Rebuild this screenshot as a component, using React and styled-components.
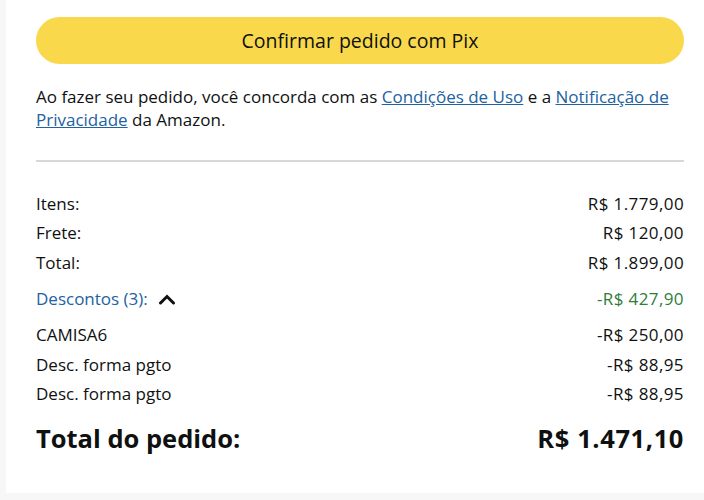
import React from "react";
import styled, { createGlobalStyle } from "styled-components";

const Global = createGlobalStyle`
  html, body { margin: 0; padding: 0; background: #f7f7f7; }
  body { font-family: "Open Sans", "Liberation Sans", Arial, sans-serif; color: #0f1111; }
`;

const Page = styled.div`
  display: flex;
  padding-left: 6px;
  height: 500px;
  box-sizing: border-box;
`;

const Card = styled.div`
  flex: 1;
  background: #fff;
  height: 493px;
  box-sizing: border-box;
  padding: 17px 20px 0 30px;
  display: flex;
  flex-direction: column;
`;

const PayButton = styled.button`
  height: 47px;
  border: none;
  border-radius: 24px;
  background: #f9d94b;
  font-family: inherit;
  font-size: 19.5px;
  color: #0f1111;
  cursor: pointer;
`;

const Legal = styled.p`
  margin: 21px 0 0;
  font-size: 17px;
  line-height: 23.3px;
`;

const Link = styled.a`
  color: #2162a1;
  text-decoration: underline;
`;

const Divider = styled.hr`
  border: none;
  border-top: 2px solid #d5d9d9;
  margin: 28px 0 27px;
`;

const Rows = styled.div`
  display: flex;
  flex-direction: column;
`;

const Row = styled.div`
  display: flex;
  justify-content: space-between;
  align-items: center;
  font-size: 17px;
  height: ${(p) => p.$h || 29.5}px;
  color: ${(p) => p.$color || "#0f1111"};
`;

const Toggle = styled.span`
  display: inline-flex;
  align-items: center;
  gap: 10px;
  color: #2162a1;
`;

const Amount = styled.span`
  color: ${(p) => p.$color || "inherit"};
  letter-spacing: 0.4px;
`;

const TotalRow = styled.div`
  display: flex;
  justify-content: space-between;
  align-items: center;
  font-size: 25.5px;
  font-weight: 700;
  margin-top: 12px;
`;

const TotalAmount = styled.span`
  letter-spacing: 0.6px;
`;

const Chevron = () => (
  <svg width="18" height="12" viewBox="0 0 18 12" fill="none">
    <path d="M2.5 10 L9 3.5 L15.5 10" stroke="#0f1111" strokeWidth="3" strokeLinecap="round" strokeLinejoin="miter" />
  </svg>
);

export default function App() {
  return (
    <>
      <Global />
      <Page>
        <Card>
          <PayButton>Confirmar pedido com Pix</PayButton>
          <Legal>
            Ao fazer seu pedido, você concorda com as <Link href="#">Condições de Uso</Link> e a{" "}
            <Link href="#">Notificação de Privacidade</Link> da Amazon.
          </Legal>
          <Divider />
          <Rows>
            <Row>
              <span>Itens:</span>
              <Amount>R$ 1.779,00</Amount>
            </Row>
            <Row>
              <span>Frete:</span>
              <Amount>R$ 120,00</Amount>
            </Row>
            <Row>
              <span>Total:</span>
              <Amount>R$ 1.899,00</Amount>
            </Row>
            <Row $h={43}>
              <Toggle>
                Descontos (3): <Chevron />
              </Toggle>
              <Amount $color="#2e7d3a">-R$ 427,90</Amount>
            </Row>
            <Row>
              <span>CAMISA6</span>
              <Amount>-R$ 250,00</Amount>
            </Row>
            <Row>
              <span>Desc. forma pgto</span>
              <Amount>-R$ 88,95</Amount>
            </Row>
            <Row>
              <span>Desc. forma pgto</span>
              <Amount>-R$ 88,95</Amount>
            </Row>
          </Rows>
          <TotalRow>
            <span>Total do pedido:</span>
            <TotalAmount>R$ 1.471,10</TotalAmount>
          </TotalRow>
        </Card>
      </Page>
    </>
  );
}
